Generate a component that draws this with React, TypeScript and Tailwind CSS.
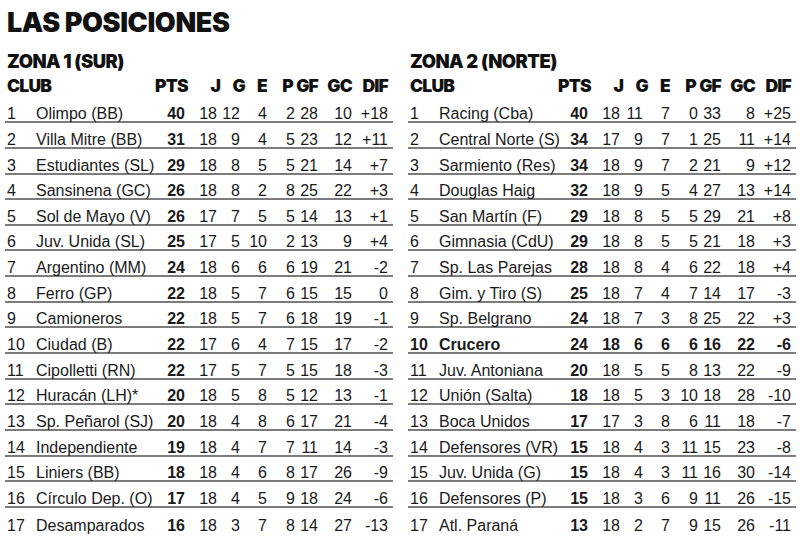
import React from 'react'

type Fila = [number, string, number, number, number, number, number, number, number, string]

const ZONA_SUR: Fila[] = [
  [1, 'Olimpo (BB)', 40, 18, 12, 4, 2, 28, 10, '+18'],
  [2, 'Villa Mitre (BB)', 31, 18, 9, 4, 5, 23, 12, '+11'],
  [3, 'Estudiantes (SL)', 29, 18, 8, 5, 5, 21, 14, '+7'],
  [4, 'Sansinena (GC)', 26, 18, 8, 2, 8, 25, 22, '+3'],
  [5, 'Sol de Mayo (V)', 26, 17, 7, 5, 5, 14, 13, '+1'],
  [6, 'Juv. Unida (SL)', 25, 17, 5, 10, 2, 13, 9, '+4'],
  [7, 'Argentino (MM)', 24, 18, 6, 6, 6, 19, 21, '-2'],
  [8, 'Ferro (GP)', 22, 18, 5, 7, 6, 15, 15, '0'],
  [9, 'Camioneros', 22, 18, 5, 7, 6, 18, 19, '-1'],
  [10, 'Ciudad (B)', 22, 17, 6, 4, 7, 15, 17, '-2'],
  [11, 'Cipolletti (RN)', 22, 17, 5, 7, 5, 15, 18, '-3'],
  [12, 'Huracán (LH)*', 20, 18, 5, 8, 5, 12, 13, '-1'],
  [13, 'Sp. Peñarol (SJ)', 20, 18, 4, 8, 6, 17, 21, '-4'],
  [14, 'Independiente', 19, 18, 4, 7, 7, 11, 14, '-3'],
  [15, 'Liniers (BB)', 18, 18, 4, 6, 8, 17, 26, '-9'],
  [16, 'Círculo Dep. (O)', 17, 18, 4, 5, 9, 18, 24, '-6'],
  [17, 'Desamparados', 16, 18, 3, 7, 8, 14, 27, '-13'],
]

const ZONA_NORTE: Fila[] = [
  [1, 'Racing (Cba)', 40, 18, 11, 7, 0, 33, 8, '+25'],
  [2, 'Central Norte (S)', 34, 17, 9, 7, 1, 25, 11, '+14'],
  [3, 'Sarmiento (Res)', 34, 18, 9, 7, 2, 21, 9, '+12'],
  [4, 'Douglas Haig', 32, 18, 9, 5, 4, 27, 13, '+14'],
  [5, 'San Martín (F)', 29, 18, 8, 5, 5, 29, 21, '+8'],
  [6, 'Gimnasia (CdU)', 29, 18, 8, 5, 5, 21, 18, '+3'],
  [7, 'Sp. Las Parejas', 28, 18, 8, 4, 6, 22, 18, '+4'],
  [8, 'Gim. y Tiro (S)', 25, 18, 7, 4, 7, 14, 17, '-3'],
  [9, 'Sp. Belgrano', 24, 18, 7, 3, 8, 25, 22, '+3'],
  [10, 'Crucero', 24, 18, 6, 6, 6, 16, 22, '-6'],
  [11, 'Juv. Antoniana', 20, 18, 5, 5, 8, 13, 22, '-9'],
  [12, 'Unión (Salta)', 18, 18, 5, 3, 10, 18, 28, '-10'],
  [13, 'Boca Unidos', 17, 17, 3, 8, 6, 11, 18, '-7'],
  [14, 'Defensores (VR)', 15, 18, 4, 3, 11, 15, 23, '-8'],
  [15, 'Juv. Unida (G)', 15, 18, 4, 3, 11, 16, 30, '-14'],
  [16, 'Defensores (P)', 15, 18, 3, 6, 9, 11, 26, '-15'],
  [17, 'Atl. Paraná', 13, 18, 2, 7, 9, 15, 26, '-11'],
]

const COLS = 'grid grid-cols-[31px_119px_30px_32px_23px_27px_28px_23px_34px_36px] pr-[5px]'
const HEAVY = "font-['Inter','Noto_Sans',sans-serif] font-black"
const BODY = "font-['Liberation_Sans','Arial',sans-serif]"

function Tabla({ titulo, filas, destacada }: { titulo: string; filas: Fila[]; destacada?: number }) {
  return (
    <div className="w-[388px]">
      <div className={`h-[24.6px] pl-[2px] text-[18.4px] leading-none tracking-[-0.5px] text-[#111] ${HEAVY}`}>
        {titulo}
      </div>
      <div className={`${COLS} h-[21px] text-[17.5px] leading-none tracking-[-0.8px] text-[#111] ${HEAVY}`}>
        <span className="pl-[2px] col-span-2">CLUB</span>
        <span className="text-right">PTS</span>
        <span className="text-right -mr-[3px]">J</span>
        <span className="text-right -mr-[5px]">G</span>
        <span className="text-right">E</span>
        <span className="text-right -ml-[4px] mr-[2px]">P</span>
        <span className="text-right">GF</span>
        <span className="text-right">GC</span>
        <span className="text-right">DIF</span>
      </div>
      {filas.map((f, i) => {
        const bold = f[0] === destacada
        return (
          <div
            key={f[0]}
            className={`${COLS} ${BODY} h-[25.65px] items-end text-[16px] leading-[14px] text-[#1a1a1a] ${
              i < filas.length - 1 ? 'border-b-2 border-[#7c7c7c]' : ''
            } ${bold ? 'font-bold' : ''}`}
          >
            <span className="pl-[2px]">{f[0]}</span>
            <span className="whitespace-nowrap">{f[1]}</span>
            <span className="text-right font-bold">{f[2]}</span>
            <span className="text-right">{f[3]}</span>
            <span className="text-right">{f[4]}</span>
            <span className="text-right">{f[5]}</span>
            <span className="text-right">{f[6]}</span>
            <span className="text-right">{f[7]}</span>
            <span className="text-right">{f[8]}</span>
            <span className="text-right">{f[9]}</span>
          </div>
        )
      })}
    </div>
  )
}

export default function App() {
  return (
    <div className="w-[800px] h-[539px] bg-white overflow-hidden">
      <div className={`h-[52px] pt-[9px] pl-[7px] text-[27px] leading-none tracking-[-0.4px] text-[#111] ${HEAVY}`}>
        LAS POSICIONES
      </div>
      <div className="flex gap-[15px] pl-[5px]">
        <Tabla titulo="ZONA 1 (SUR)" filas={ZONA_SUR} />
        <Tabla titulo="ZONA 2 (NORTE)" filas={ZONA_NORTE} destacada={10} />
      </div>
    </div>
  )
}
